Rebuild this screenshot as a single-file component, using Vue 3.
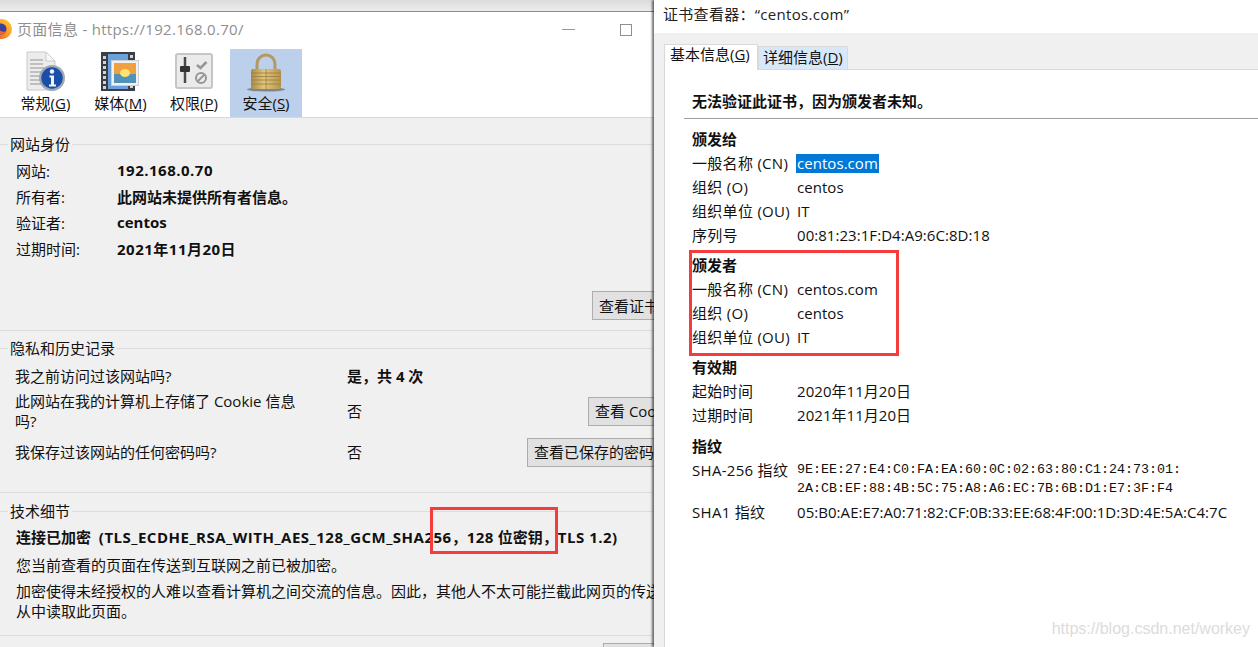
<script setup>
const idRows = [
  ['网站:', '192.168.0.70', true],
  ['所有者:', '此网站未提供所有者信息\u3002', false],
  ['验证者:', 'centos', false],
  ['过期时间:', '2021年11月20日', true],
]
const issuedTo = [
  ['一般名称 (CN)', 'centos.com', true],
  ['组织 (O)', 'centos', false],
  ['组织单位 (OU)', 'IT', false],
  ['序列号', '00:81:23:1F:D4:A9:6C:8D:18', false],
]
const issuedBy = [
  ['一般名称 (CN)', 'centos.com'],
  ['组织 (O)', 'centos'],
  ['组织单位 (OU)', 'IT'],
]
const validity = [
  ['起始时间', '2020年11月20日'],
  ['过期时间', '2021年11月20日'],
]
</script>

<template>
  <div class="desk">
    <section class="win-left">
      <div class="backdrop"></div>
      <header class="titlebar">
        <svg class="fx" width="14" height="22" viewBox="0 0 14 22">
          <defs>
            <linearGradient id="fxg" x1="1" y1="0" x2="0" y2="1">
              <stop offset="0" stop-color="#ffd23c" />
              <stop offset="0.6" stop-color="#ff8a1e" />
              <stop offset="1" stop-color="#e8402a" />
            </linearGradient>
          </defs>
          <circle cx="2" cy="11" r="10" fill="url(#fxg)" />
          <circle cx="1" cy="11" r="5.500" fill="#3b3f9e" />
          <path d="M-4 14c3 3 8 3 11-1-3 1-6 1-7-1z" fill="#f2672a" />
        </svg>
        <span class="wintitle">页面信息 - https://192.168.0.70/</span>
        <span class="minbtn"></span>
        <span class="maxbtn"></span>
      </header>
      <nav class="toolbar">
        <div class="tool t1">
          <svg width="42" height="42" viewBox="0 0 42 42">
            <path d="M2 1h19l9 9v29H2z" fill="#ececec" stroke="#c9c9c9" />
            <path d="M21 1v9h9z" fill="#fafafa" stroke="#c9c9c9" />
            <path d="M5 9h13M5 13h13M5 17h20M5 21h16M5 25h12M5 29h11M5 33h11" stroke="#b0b0b0" stroke-width="1.300" />
            <circle cx="27" cy="27" r="13" fill="#9fa8b5" />
            <circle cx="27" cy="27" r="10.700" fill="#1b4ea6" />
            <circle cx="27" cy="20.500" r="2.200" fill="#eef3fb" />
            <path d="M24.500 24.500h4.500v9h2v2h-7v-2h2v-7h-1.500z" fill="#eef3fb" />
          </svg>
          <span>常规(<u>G</u>)</span>
        </div>
        <div class="tool t1">
          <svg width="42" height="42" viewBox="0 0 42 42">
            <rect x="1" y="1" width="34" height="39" fill="#3a3f47" />
            <rect x="8" y="3" width="20" height="35" fill="#6aa0dc" />
            <path d="M3 5h3v3H3zM3 10h3v3H3zM3 15h3v3H3zM3 20h3v3H3zM3 25h3v3H3zM3 30h3v3H3zM3 35h3v3H3zM30 4h3v3h-3zM30 34h3v3h-3z" fill="#d4d4d4" />
            <rect x="11.500" y="9.500" width="27" height="25" fill="#f1f1f1" stroke="#cfcfcf" />
            <rect x="14" y="12" width="22" height="11" fill="#f0a040" />
            <rect x="14" y="23" width="22" height="9" fill="#4f94b8" />
            <ellipse cx="25" cy="22" rx="5" ry="4" fill="#ffe36e" />
          </svg>
          <span>媒体(<u>M</u>)</span>
        </div>
        <div class="tool">
          <svg width="42" height="42" viewBox="0 0 42 42">
            <rect x="3" y="3" width="36" height="34" rx="2" fill="#ebebeb" stroke="#c6c6c6" stroke-width="2" />
            <path d="M12 6v26" stroke="#4a4a4a" stroke-width="2.500" />
            <rect x="7" y="15" width="10" height="6" rx="1" fill="#333" />
            <path d="M24 14l3.500 3 6-6" stroke="#969696" stroke-width="2.500" fill="none" />
            <circle cx="28" cy="27" r="5" fill="none" stroke="#969696" stroke-width="2" />
            <path d="M24.500 30.500l7-7" stroke="#969696" stroke-width="2" />
          </svg>
          <span>权限(<u>P</u>)</span>
        </div>
        <div class="tool active">
          <svg width="42" height="42" viewBox="0 0 42 42">
            <defs>
              <linearGradient id="lockg" x1="0" y1="0" x2="1" y2="0">
                <stop offset="0" stop-color="#a98a4a" />
                <stop offset="0.45" stop-color="#e3c67e" />
                <stop offset="1" stop-color="#b4944e" />
              </linearGradient>
            </defs>
            <path d="M12 20v-7a9 9 0 0 1 18 0v7" fill="none" stroke="#b29a60" stroke-width="3" />
            <ellipse cx="21" cy="38.500" rx="19" ry="2" fill="#7d8590" />
            <rect x="6" y="18" width="30" height="20" rx="2" fill="url(#lockg)" />
            <path d="M6 22h30M6 25.500h30M6 29h30M6 33h30M21 18v20" stroke="#9a7c3c" stroke-width="0.800" />
          </svg>
          <span>安全(<u>S</u>)</span>
        </div>
      </nav>

      <main class="content">
        <section class="group g-id">
          <h3 class="legend">网站身份</h3>
          <div v-for="r in idRows" :key="r[0]" class="id-row">
            <span class="id-k">{{ r[0] }}</span><b :class="{ latin: r[2] }">{{ r[1] }}</b>
          </div>
          <div class="btn-line"><button class="b-cert">查看证书(V)</button></div>
        </section>

        <section class="group g-priv">
          <h3 class="legend">隐私和历史记录</h3>
          <div class="p-row p1">
            <span class="p-q">我之前访问过该网站吗?</span><b class="p-a">是&#xFF0C;共 4 次</b>
          </div>
          <div class="p-row p2">
            <span class="p-q">此网站在我的计算机上存储了 Cookie 信息吗?</span><span class="p-a">否</span>
            <button class="b-cookie">查看 Cookie(K)</button>
          </div>
          <div class="p-row p3">
            <span class="p-q">我保存过该网站的任何密码吗?</span><span class="p-a">否</span>
            <button class="b-pass">查看已保存的密码(W)</button>
          </div>
        </section>

        <section class="group g-tech">
          <h3 class="legend">技术细节</h3>
          <b class="tech-b">连接已加密&nbsp; <span class="latin">(TLS_ECDHE_RSA_WITH_AES_128_GCM_SHA256</span>&#xFF0C;<span class="latin">128</span> 位密钥&#xFF0C;<span class="latin">TLS 1.2)</span></b>
          <p class="tech-1">您当前查看的页面在传送到互联网之前已被加密&#x3002;</p>
          <p class="tech-2">加密使得未经授权的人难以查看计算机之间交流的信息&#x3002;因此&#xFF0C;其他人不太可能拦截此网页的传送内容并<br />从中读取此页面&#x3002;</p>
        </section>
        <div class="bottom-btn"><button aria-label="帮助"></button></div>
      </main>
    </section>

    <section class="win-right">
      <header class="r-title">证书查看器&#xFF1A;“centos.com”</header>
      <div class="r-body">
        <div class="tabs">
          <span class="tab on">基本信息(<u>G</u>)</span>
          <span class="tab">详细信息(<u>D</u>)</span>
        </div>
        <div class="panel">
          <b class="warn">无法验证此证书&#xFF0C;因为颁发者未知&#x3002;</b>
          <hr />
          <h4 class="h-first">颁发给</h4>
          <div v-for="r in issuedTo" :key="r[0]" class="c-row">
            <span class="c-k">{{ r[0] }}</span><span class="wide" :class="{ sel: r[2] }">{{ r[1] }}</span>
          </div>
          <h4 class="h-by">颁发者</h4>
          <div v-for="r in issuedBy" :key="r[0]" class="c-row">
            <span class="c-k">{{ r[0] }}</span><span class="wide">{{ r[1] }}</span>
          </div>
          <h4 class="h-by">有效期</h4>
          <div v-for="r in validity" :key="r[0]" class="c-row">
            <span class="c-k">{{ r[0] }}</span><span class="wide">{{ r[1] }}</span>
          </div>
          <h4 class="h-fp">指纹</h4>
          <div class="c-row fp">
            <span class="c-k">SHA-256 指纹</span>
            <span class="mono">9E:EE:27:E4:C0:FA:EA:60:0C:02:63:80:C1:24:73:01:<br />2A:CB:EF:88:4B:5C:75:A8:A6:EC:7B:6B:D1:E7:3F:F4</span>
          </div>
          <div class="c-row sha1">
            <span class="c-k">SHA1 指纹</span><span class="wide">05:B0:AE:E7:A0:71:82:CF:0B:33:EE:68:4F:00:1D:3D:4E:5A:C4:7C</span>
          </div>
        </div>
      </div>
      <span class="watermark">https://blog.csdn.net/workey</span>
    </section>

    <div class="mark mark-a"></div>
    <div class="mark mark-b"></div>
  </div>
</template>

<style>
html, body { margin: 0; background: #fff; overflow: hidden; }
</style>

<style scoped>
.desk {
  position: relative;
  width: 1258px;
  height: 647px;
  overflow: hidden;
  font-family: "Open Sans", "Noto Sans CJK SC", sans-serif;
  font-size: 15px;
  color: #111;
}
.wide { letter-spacing: 0.05px; }
.latin { letter-spacing: 0.5px; }
.win-left {
  position: absolute;
  left: 0;
  top: 0;
  width: 700px;
  height: 647px;
  display: flex;
  flex-direction: column;
  background: #f0f0f0;
}
.backdrop {
  height: 11px;
  flex: none;
  background: linear-gradient(#dcdcdc, #ececec);
  border-bottom: 1px solid #8c8c8c;
}
.titlebar {
  height: 33px;
  background: #fff;
  display: flex;
  align-items: center;
  position: relative;
  flex: none;
}
.fx { margin-right: 3px; flex: none; }
.wintitle { color: #8f8f8f; font-size: 15px; letter-spacing: 0.3px; }
.minbtn {
  position: absolute;
  left: 562px;
  top: 17px;
  width: 13px;
  height: 1px;
  background: #999;
}
.maxbtn {
  position: absolute;
  left: 620px;
  top: 12px;
  width: 10px;
  height: 10px;
  border: 1px solid #8f8f8f;
}
.toolbar {
  height: 68px;
  padding: 4px 0 0 8px;
  background: #fff;
  border-bottom: 1px solid #d8d8d8;
  display: flex;
  flex: none;
}
.tool {
  width: 72px;
  display: flex;
  flex-direction: column;
  align-items: center;
  padding-top: 2px;
  box-sizing: border-box;
  line-height: 20px;
  white-space: nowrap;
}
.tool.t1 { width: 75px; }
.tool svg { flex: none; height: 42px; }
.tool.active { background: #bcd0ec; }
.content { flex: 1; min-height: 0; }
.group { border-bottom: 1px solid #dcdcdc; }
.legend {
  margin: 0;
  height: 20px;
  display: flex;
  align-items: center;
  gap: 2px;
  font-size: inherit;
  font-weight: 400;
  line-height: 20px;
}
.legend::before { content: ""; width: 8px; height: 1px; background: #dcdcdc; }
.legend::after { content: ""; flex: 1; height: 1px; background: #dcdcdc; }
.g-id { padding: 16px 0 10px; }
.id-row {
  display: flex;
  height: 26px;
  align-items: center;
  padding-left: 16px;
  white-space: nowrap;
}
.legend + .id-row { margin-top: 3px; }
.id-k { width: 101px; }
.btn-line { display: flex; justify-content: flex-end; padding-right: 9px; margin-top: 30px; }
button {
  height: 29px;
  padding: 0 0 0 6px;
  border: 1px solid #adadad;
  background: #e1e1e1;
  font: inherit;
  color: #111;
  white-space: nowrap;
  text-align: left;
  flex: none;
}
.b-cert { width: 99px; }
.b-cookie { width: 107px; margin-right: -4px; }
.b-pass { width: 164px; }
.g-priv { padding: 7px 0 21px; }
.p-row {
  display: flex;
  align-items: center;
  padding: 0 9px 0 15px;
  line-height: 20px;
}
.p-q { width: 332px; flex: none; box-sizing: border-box; padding-right: 40px; }
.p-a { flex: 1; }
.p1 { height: 26px; margin-top: 5px; }
.p2 { height: 44px; }
.p3 { height: 38px; }
.g-tech { padding: 8px 0 14px; }
.tech-b { display: block; padding-left: 16px; margin-top: 4px; line-height: 24px; white-space: nowrap; }
.tech-1 { margin: 4px 0 0 16px; line-height: 24px; white-space: nowrap; }
.tech-2 { margin: 4px 0 0 16px; line-height: 20px; white-space: nowrap; }
.bottom-btn { display: flex; justify-content: flex-end; margin-top: 7px; padding-right: 9px; }
.bottom-btn button { width: 88px; }

.win-right {
  position: absolute;
  left: 654px;
  top: 0;
  width: 604px;
  height: 647px;
  background: #f0f0f0;
  box-shadow: -2px 0 2px rgba(0, 0, 0, 0.55);
  display: flex;
  flex-direction: column;
}
.r-title {
  height: 33px;
  flex: none;
  background: #fff;
  padding-left: 9px;
  line-height: 29px;
  color: #222;
  letter-spacing: 0.3px;
}
.r-body { flex: 1; padding: 10px 0 0 10px; display: flex; flex-direction: column; }
.tabs { display: flex; align-items: flex-end; height: 26px; flex: none; }
.tab {
  height: 23px;
  line-height: 21px;
  padding-left: 4px;
  width: 90px;
  box-sizing: border-box;
  background: #d9e8f8;
  border: 1px solid #d9d9d9;
  border-bottom: 0;
  white-space: nowrap;
}
.tab.on {
  height: 26px;
  width: 94px;
  padding-left: 5px;
  background: #fff;
  line-height: 19px;
  position: relative;
  z-index: 1;
  margin-bottom: -1px;
}
.panel {
  flex: 1;
  background: #fff;
  border-top: 1px solid #d9d9d9;
  border-left: 1px solid #d9d9d9;
  padding-left: 27px;
  white-space: nowrap;
}
.warn { display: block; margin-top: 21px; line-height: 20px; }
hr {
  margin: 7px 0 0 -8px;
  border: 0;
  border-top: 1px solid #a0a0a0;
}
h4 { margin: 0; font-size: inherit; line-height: 24px; font-weight: 700; }
.h-first { margin-top: 8px; }
.h-by { margin-top: 6px; }
.h-fp { margin-top: 7px; }
.c-row { display: flex; height: 24px; line-height: 24px; }
.c-k { width: 105px; flex: none; letter-spacing: 0.3px; }
.sel { background: #0078d7; color: #fff; line-height: 19px; height: 19px; margin-top: 3px; padding: 0 1px; margin-left: -1px; }
.fp { height: 42px; }
.mono { font-family: "Liberation Mono", monospace; font-size: 13.330px; line-height: 19px; padding-top: 2px; }
.watermark {
  position: absolute;
  right: 8px;
  bottom: 9px;
  font-family: "Liberation Sans", sans-serif;
  font-size: 16px;
  color: #dcdcdc;
}
.mark { position: absolute; border: 3px solid #f53c3c; box-sizing: border-box; pointer-events: none; }
.mark-a { left: 430px; top: 507px; width: 128px; height: 47px; }
.mark-b { left: 689px; top: 250px; width: 210px; height: 106px; }
</style>
